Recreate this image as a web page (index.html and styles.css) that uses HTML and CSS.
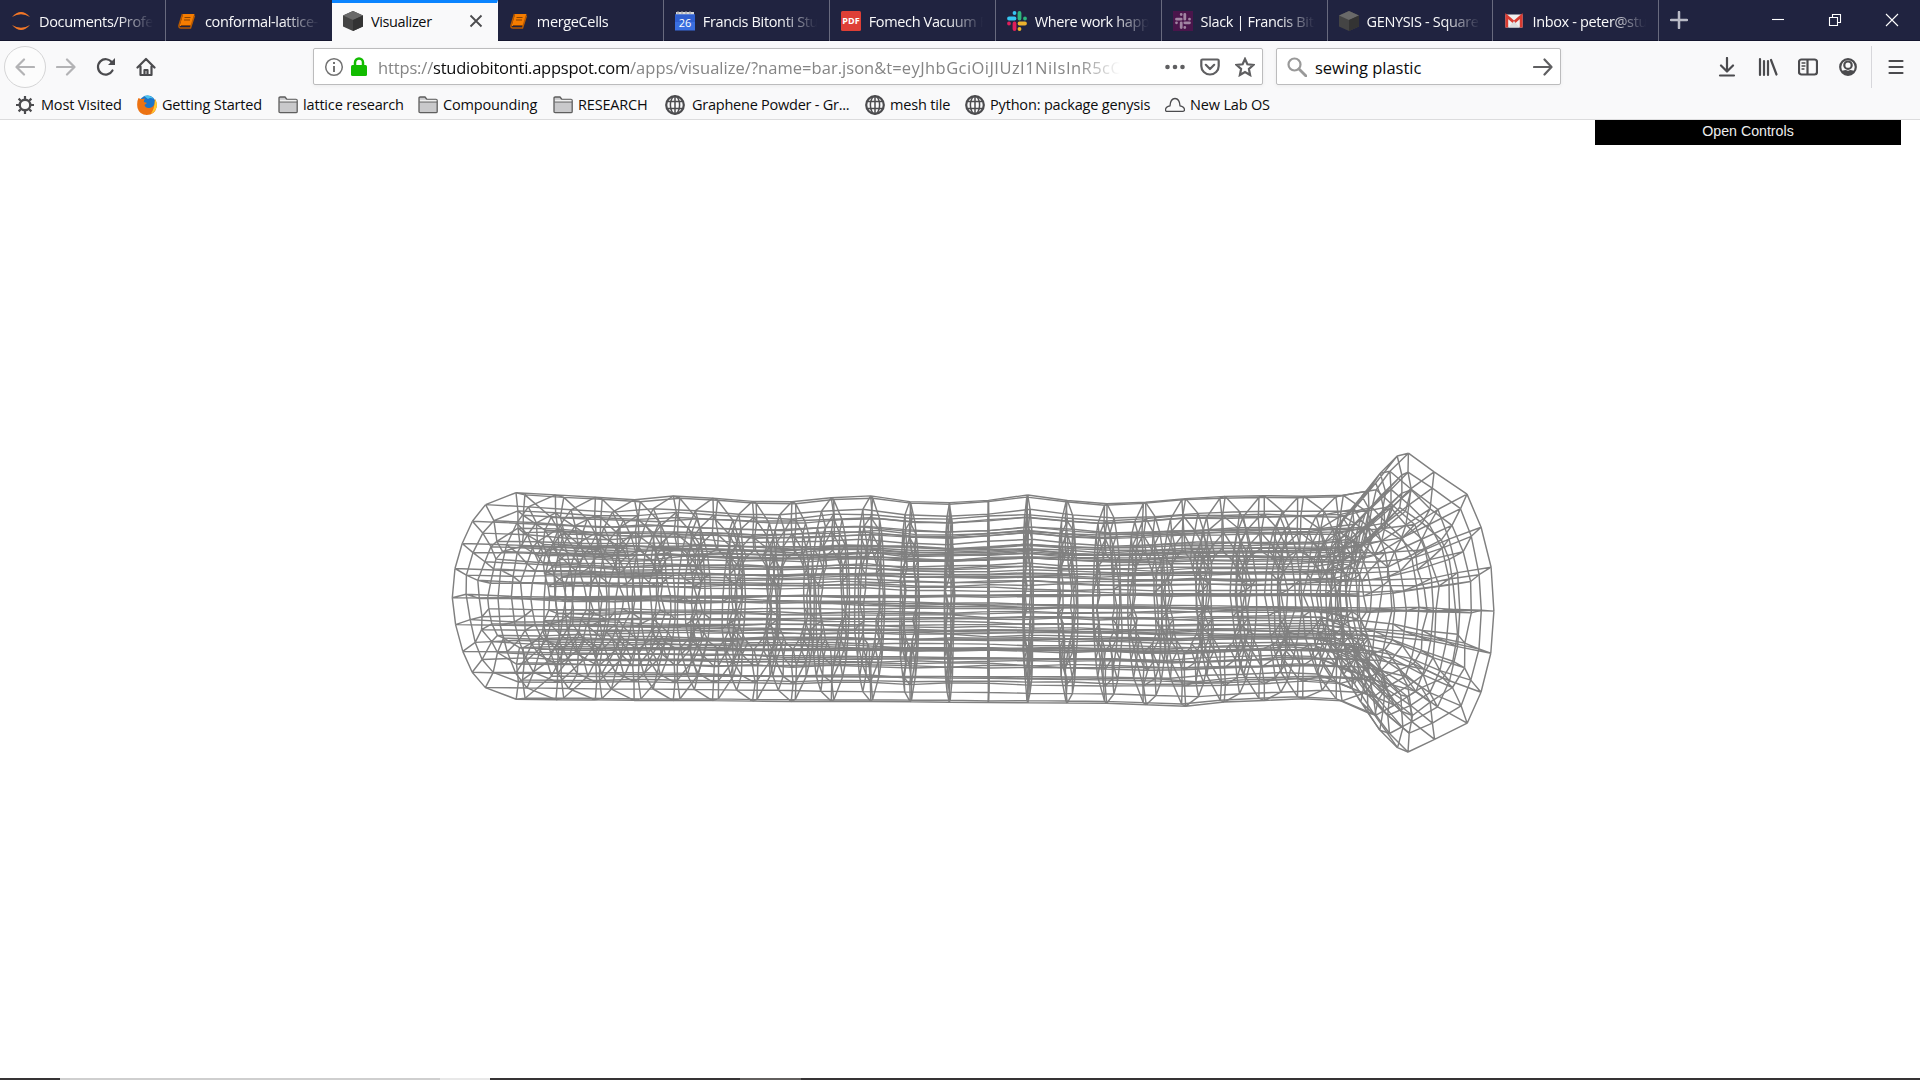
FILE: index.html
```html
<!DOCTYPE html>
<html lang="en">
<head>
<meta charset="utf-8">
<title>Visualizer</title>
<link rel="stylesheet" href="styles.css">
</head>
<body>
<svg class="defs" aria-hidden="true">
  <symbol id="book" viewBox="0 0 20 20"><path d="M6 3h11.500l-3 12H2.500z" fill="#f57c00"/><path d="M5.500 3 2 14.500q-.5 2.500 2 2.500h9.500l4-12.500" fill="none" stroke="#b85a00" stroke-width="1.500"/><path d="M7.500 6.500h6M7 9h6M4 14.500h9.500" stroke="#8a4200" stroke-width="1.200"/></symbol>
  <symbol id="cube" viewBox="0 0 20 20"><path d="M10 0l10 4.500v11L10 20 0 15.500v-11z" fill="#444"/><path d="M10 0l10 4.500L10 9 0 4.500z" fill="#696969"/><path d="M10 9l10-4.500v11L10 20z" fill="#333"/></symbol>
  <symbol id="folder" viewBox="0 0 20 20"><path d="M1 16.500V3.200Q1 2 2.200 2H7l2 2.500h9q1.200 0 1.200 1.200v10.800q0 1.200-1.200 1.200H2.200Q1 17.700 1 16.500z" fill="#c9c9cb" stroke="#5e5e5e" stroke-width="1.300"/><path d="M1.500 7h17.500" stroke="#5e5e5e"/><path d="M2 4.800h16.500v1.500H2z" fill="#efefef"/></symbol>
  <symbol id="globe" viewBox="0 0 20 20"><g fill="none" stroke="#4b4b4e" stroke-width="1.500"><circle cx="10" cy="10" r="8.800" stroke-width="2.200"/><ellipse cx="10" cy="10" rx="4.600" ry="8.800"/><path d="M10 1v18M2.500 6.500h15M2.500 13.500h15"/></g></symbol>
</svg>

<header class="tabs">
  <div class="tab"><svg class="fav" viewBox="0 0 20 20"><path d="M1 6Q10-4 19 6 10 0.500 1 6zM1 14Q10 24 19 14 10 19.500 1 14z" fill="#f37726"/></svg><span class="label">Documents/Profes</span></div>
  <div class="tab"><svg class="fav"><use href="#book"/></svg><span class="label">conformal-lattice-</span></div>
  <div class="tab active"><svg class="fav"><use href="#cube"/></svg><span class="label">Visualizer</span><svg class="x" viewBox="0 0 14 14"><path d="M1.500 1.500l11 11M12.500 1.500l-11 11"/></svg></div>
  <div class="tab"><svg class="fav"><use href="#book"/></svg><span class="label">mergeCells</span></div>
  <div class="tab"><svg class="fav" viewBox="0 0 20 20"><path d="M1 1h18v5H1z" fill="#d9d9d9"/><path d="M3 0v3M7 0v3M11 0v3M15 0v3" stroke="#999"/><path d="M0 3.500h20v16H0z" fill="#3a6fe0"/><path d="M0 3.500h20V11H0z" fill="#2f5fd0"/><text x="10" y="15.500" class="cal">26</text></svg><span class="label">Francis Bitonti Studio</span></div>
  <div class="tab"><svg class="fav" viewBox="0 0 20 20"><rect width="20" height="20" rx="1.500" fill="#de3f36"/><text x="10" y="13.300" class="pdf">PDF</text></svg><span class="label">Fomech Vacuum F</span></div>
  <div class="tab"><svg class="fav" viewBox="0 0 20 20"><g stroke-width="3.800" stroke-linecap="round"><path d="M7.500 2v0M2 7.500h5.500" stroke="#36c5f0"/><path d="M12.500 2v5.500M18 7.500v0" stroke="#2eb67d"/><path d="M12.500 12.500H18M12.500 18v0" stroke="#ecb22e"/><path d="M7.500 12.500V18M2 12.500v0" stroke="#e01e5a"/></g></svg><span class="label">Where work happen</span></div>
  <div class="tab"><svg class="fav" viewBox="0 0 20 20"><path d="M0 0h20v20H0z" fill="#4a154b"/><g stroke="#a184a2" stroke-width="2.800" stroke-linecap="round"><path d="M8.200 3.500v0M3.500 8.200h4.700M11.800 3.500v4.700M16.500 8.200v0M11.800 11.800h4.700M11.800 16.500v0M8.200 11.800v4.700M3.500 11.800v0"/></g></svg><span class="label">Slack | Francis Biton</span></div>
  <div class="tab"><svg class="fav"><use href="#cube"/></svg><span class="label">GENYSIS - Square</span></div>
  <div class="tab"><svg class="fav" viewBox="0 0 20 20"><path d="M1.500 3.500h17v13h-17z" fill="#eee"/><path d="M2.800 16.500V5l7.200 6.300L17.200 5v11.500" fill="none" stroke="#d93a30" stroke-width="2.800"/><path d="M4.500 16.500L10 10l5.500 6.500z" fill="#ddd"/></svg><span class="label">Inbox - peter@stud</span></div>
  <svg class="plus" viewBox="0 0 18 18"><path d="M9 1v16M1 9h16"/></svg>
  <div class="window-buttons">
    <svg viewBox="0 0 14 14"><path d="M1 6.500h12"/></svg>
    <svg viewBox="0 0 14 14"><path d="M1.500 4.500h8v8h-8zM4.500 4.500v-3h8v8h-3"/></svg>
    <svg viewBox="0 0 14 14"><path d="M1 1l12 12M13 1L1 13"/></svg>
  </div>
</header>

<nav class="toolbar">
  <div class="buttons">
    <span class="back"><svg class="ico pale" viewBox="0 0 20 20"><path d="M19 10H2M9 2.500L1.500 10 9 17.500"/></svg></span>
    <span class="slot"><svg class="ico pale" viewBox="0 0 20 20"><path d="M1 10h17M11 2.500L18.500 10 11 17.500"/></svg></span>
    <span class="slot"><svg class="ico" viewBox="0 0 20 20"><path d="M16.500 13.500A7.700 7.700 0 1 1 16 5.500"/><path d="M19 1v7h-7z" fill="#4b4b4e" stroke="none"/></svg></span>
    <span class="slot"><svg class="ico" viewBox="0 0 20 20"><path d="M1.500 10.500L10 2l8.500 8.500M4.500 9.500V18h11V9.500M8.500 18v-5h3v5"/></svg></span>
  </div>
  <div class="field url">
    <svg class="info" viewBox="0 0 20 20"><circle cx="10" cy="10" r="8.300"/><path d="M10 9v6M10 5v2" stroke-width="2"/></svg>
    <svg class="lock" viewBox="0 0 16 20"><path d="M4 9V5.500a4 4 0 0 1 8 0V9" fill="none" stroke="#12bc00" stroke-width="2.500"/><rect y="8" width="16" height="11" rx="1.500" fill="#12bc00"/></svg>
    <span class="address">https://<b>studiobitonti.appspot.com</b><span class="path">/apps/visualize/?name=bar.json&amp;t=<span class="token">eyJhbGciOiJIUzI1NiIsInR5cCI</span></span></span>
    <svg class="ico dots" viewBox="0 0 20 20"><circle cx="2.500" cy="10" r="2.300"/><circle cx="10" cy="10" r="2.300"/><circle cx="17.500" cy="10" r="2.300"/></svg>
    <svg class="ico" viewBox="0 0 20 20"><path d="M2.500 2.500h15q1.200 0 1.200 1.200V9a8.700 8.500 0 0 1-17.400 0V3.700q0-1.200 1.200-1.200z"/><path d="M5.800 7.800L10 12l4.200-4.200"/></svg>
    <svg class="ico star" viewBox="0 0 20 20"><path stroke-linejoin="miter" d="M10 2l2.400 5.300 5.900.7-4.400 4 1.200 6L10 15l-5.100 3 1.200-6-4.400-4 5.900-.7z"/></svg>
  </div>
  <div class="field search">
    <svg class="ico glass" viewBox="0 0 20 20"><circle cx="7.500" cy="7.500" r="6"/><path d="M12 12l7 7" stroke-width="2.800"/></svg>
    <span class="query">sewing plastic</span>
    <svg class="ico" viewBox="0 0 20 20"><path d="M1 10h17M11.500 2.500L18.500 10l-7 7.500"/></svg>
  </div>
  <div class="buttons right">
    <span class="slot"><svg class="ico" viewBox="0 0 20 20"><path d="M10 1v13M4 8.500l6 6 6-6M3 18.500h14"/></svg></span>
    <span class="slot"><svg class="ico" viewBox="0 0 20 20"><path d="M2 2v16M6 4v14M10 4v14M13 3l5.500 14.500"/></svg></span>
    <span class="slot"><svg class="ico" viewBox="0 0 20 20"><rect x="1" y="2.500" width="18" height="15" rx="2.500"/><path d="M9.500 3v14"/><path d="M4 6h3M4 9h3M4 12h2" stroke-width="1.300"/></svg></span>
    <span class="slot"><svg class="ico" viewBox="0 0 20 20"><circle cx="10" cy="10" r="7.800"/><circle cx="10" cy="8.200" r="3.700"/><path d="M3.500 14q3-1 4.500-1 2 1.500 4 0 1.500 0 4.500 1-2 4-6.500 4t-6.500-4z" fill="#4b4b4e" stroke="none"/></svg></span>
    <span class="menu"><svg class="ico" viewBox="0 0 20 20"><path d="M3.500 4h13M3.500 10h13M3.500 16h13"/></svg></span>
  </div>
</nav>

<div class="bookmarks">
  <span class="mark w1"><svg viewBox="0 0 20 20"><circle cx="9" cy="10" r="5.300" fill="none" stroke="#4b4b4e" stroke-width="2.400"/><path d="M9 1v3M9 16v3M0 10h3M15 10h3M2.600 3.600l2.200 2.200M13.200 14.200l2.200 2.200M2.600 16.400l2.200-2.200M13.200 5.800l2.200-2.200" stroke="#4b4b4e" stroke-width="2.200"/></svg>Most Visited</span>
  <span class="mark w2"><svg viewBox="0 0 20 20"><circle cx="10.500" cy="9" r="8.500" fill="#1b75c9"/><path d="M7 1q6-2 10 3-4-2-6 0z" fill="#4cc3ee"/><path d="M1.500 3Q3 4 5 4l3-.5Q6.500 5.500 7 7l3 1-2.500 2q1 3.500 5 3 3.500-.5 5-4L18 4q2.500 4 1.700 8-2 8-10 8-7 0-9.200-7Q-.5 7 1.500 3z" fill="#ec7212"/><path d="M18 4q2.500 4 1.700 8-1.500 5-6 7 4-5 4.300-15z" fill="#ffcb2e"/></svg>Getting Started</span>
  <span class="mark w3"><svg><use href="#folder"/></svg>lattice research</span>
  <span class="mark w4"><svg><use href="#folder"/></svg>Compounding</span>
  <span class="mark w5"><svg><use href="#folder"/></svg>RESEARCH</span>
  <span class="mark w6 wide"><svg><use href="#globe"/></svg>Graphene Powder - Gr...</span>
  <span class="mark w7"><svg><use href="#globe"/></svg>mesh tile</span>
  <span class="mark w8"><svg><use href="#globe"/></svg>Python: package genysis</span>
  <span class="mark w9"><svg viewBox="0 0 20 20"><path d="M2 16.300Q.5 16.300.5 14.800q0-3 4.500-4Q5.500 3.500 10 3.500t5 7.300q4.500 1 4.500 4 0 1.500-1.500 1.500z" fill="none" stroke="#4b4b4e" stroke-width="1.300"/></svg>New Lab OS</span>
</div>

<main class="stage">
  <svg class="mesh" id="mesh" viewBox="0 120 1920 958"></svg>
  <div class="controls">Open Controls</div>
</main>
<footer class="taskbar"><i class="t1"></i><i class="t2"></i><i class="t3"></i><i class="t4"></i><i class="t5"></i></footer>
<script src="mesh.js"></script>
</body>
</html>
```
FILE: styles.css
```css
* { box-sizing: border-box; }
body {
  margin: 0;
  height: 1080px;
  display: flex;
  flex-direction: column;
  overflow: hidden;
  background: #fff;
  color: #0c0c0d;
  font-family: "Open Sans", "Noto Sans", sans-serif;
  font-size: 15px;
}
svg { display: block; flex: none; }
.defs { width: 0; height: 0; position: absolute; }

.tabs { display: flex; height: 41px; flex: none; background: #202340; color: #f9f9fa; border-bottom: 1px solid #14162e; }
.tab { width: 165.95px; height: 41px; flex: none; display: flex; align-items: center; padding: 1px 12px 0 11px; border-right: 1px solid #686a7e; }
.tab:nth-child(2), .tab.active { border-right-color: transparent; }
.tab.active { background: #f9f9fa; color: #0c0c0d; border-top: 3px solid #0a84ff; padding: 0 10px 2px 11px; }
.fav { width: 20px; height: 20px; margin-right: 8px; }
.label { flex: 1; overflow: hidden; white-space: nowrap; font-size: 14.5px; letter-spacing: -0.35px; -webkit-mask-image: linear-gradient(90deg, #000 calc(100% - 36px), transparent); mask-image: linear-gradient(90deg, #000 calc(100% - 36px), transparent); }
.active .label { -webkit-mask-image: none; mask-image: none; }
.cal { font: 11px "Open Sans", sans-serif; fill: #fff; text-anchor: middle; }
.pdf { font: bold 9px "Open Sans", sans-serif; fill: #fff; text-anchor: middle; }
.x { width: 14px; height: 14px; margin-right: 4px; fill: none; stroke: #4b4b4e; stroke-width: 1.8; }
.plus { width: 18px; height: 18px; margin: 11px 0 0 11px; stroke: #b9bac6; stroke-width: 2.5; stroke-linecap: round; }
.window-buttons { margin: 13px 21px 0 auto; display: flex; gap: 43px; }
.window-buttons svg { width: 14px; height: 14px; fill: none; stroke: #fff; stroke-width: 1.1; }

.toolbar { height: 51px; flex: none; display: flex; align-items: center; background: #f9f9fa; }
.buttons { display: flex; width: 313px; padding-left: 4px; align-items: center; }
.back { width: 42px; height: 42px; border: 1px solid #d5d5d6; border-radius: 50%; background: #fcfcfc; display: grid; place-items: center; }
.slot { width: 40.2px; display: grid; place-items: center; }
.ico { width: 20px; height: 20px; fill: none; stroke: #4b4b4e; stroke-width: 2.2; stroke-linecap: round; stroke-linejoin: round; }
.pale { stroke: #b3b3b5; }
.field { height: 37px; display: flex; align-items: center; border: 1px solid #bcbcbd; border-radius: 2px; background: #fff; box-shadow: 0 1px 4px rgba(0, 0, 0, .06); font-size: 16.5px; }
.field .ico { stroke: #5f5f61; }
.url { width: 950px; margin-right: 13px; }
.info { width: 20px; height: 20px; margin-left: 10px; fill: none; stroke: #737373; stroke-width: 1.5; }
.lock { width: 16px; height: 20px; margin: 0 11px 0 7px; }
.address { width: 742px; flex: none; margin-right: 45px; padding-top: 1px; overflow: hidden; white-space: nowrap; color: #858585; letter-spacing: -0.15px; -webkit-mask-image: linear-gradient(90deg, #000 700px, transparent 742px); mask-image: linear-gradient(90deg, #000 700px, transparent 742px); }
.address b { color: #0c0c0d; font-weight: normal; letter-spacing: -0.25px; }
.path { letter-spacing: 0.04px; }
.token { letter-spacing: 0.45px; }
.url .ico { margin-right: 15px; }
.url .star { margin-right: 7px; }
.url .dots { fill: #5f5f61; stroke: none; }
.search { width: 285px; padding: 0 7px 0 10px; }
.field .glass { stroke: #999; }
.query { flex: 1; margin-left: 8px; padding-top: 1px; letter-spacing: -0.03px; }
.buttons.right { flex: 1; width: auto; padding: 0; justify-content: flex-end; }
.slot + .menu { margin-left: 3px; }
.menu { width: 49px; height: 42px; border-left: 1px solid #d7d7db; display: grid; place-items: center; }

.bookmarks { height: 28px; flex: none; display: flex; padding: 0 0 2px 16px; background: #f9f9fa; border-bottom: 1px solid #dcdcdd; }
.mark { display: flex; align-items: center; flex: none; gap: 5px; font-size: 14.5px; letter-spacing: -0.17px; white-space: nowrap; }
.mark svg { width: 20px; height: 20px; }
.mark.wide { gap: 7px; letter-spacing: -0.24px; }
.w1 { width: 121px; } .w2 { width: 141px; } .w3 { width: 140px; } .w4 { width: 135px; } .w5 { width: 112px; }
.w6 { width: 200px; } .w7 { width: 100px; } .w8 { width: 200px; }

.stage { position: relative; height: 958px; flex: none; }
.mesh { width: 1920px; height: 958px; }
.mesh path { fill: none; stroke: #808080; stroke-width: 1.45; }
.controls { position: absolute; top: 0; right: 19px; width: 306px; height: 25px; background: #000; color: #eee; font: 14.2px/23px "Liberation Sans", sans-serif; text-align: center; }
.taskbar { display: flex; height: 2px; background: #363435; }
.taskbar i { height: 2px; }
.t1 { width: 60px; } .t2 { width: 380px; background: #cfcfcf; } .t3 { width: 50px; background: #e8e8e8; } .t4 { width: 250px; } .t5 { width: 61px; background: #625f5e; }
```
FILE: mesh.js
```js
// Wireframe of a flared bar: angular spokes x radial layers x stations, in perspective.
const CX = 988.5, DEPTH = 840;
const half = [0, 14, 28, 42, 56, 86];
const angles = [];
for (const a of half) angles.push(a);
for (const a of half.slice().reverse()) angles.push(180 - a);
for (const a of half.slice(1)) angles.push(180 + a);
for (const a of half.slice(1).reverse()) angles.push(360 - a);

const crest = [103, 101, 99, 97, 101, 99, 96, 96, 100, 102, 97, 96, 99, 104, 99, 96, 98, 102, 104, 105, 105, 106];
const base = [102, 102, 102, 102, 102, 102, 102, 102, 102, 102, 102, 102, 102, 102, 102, 102, 103, 104, 100, 98, 96, 98];
const thickness = [1, .82, .65, .5];
const flare = [
  [[1372, 112], [1385, 130], [1403, 148]],
  [[1370, 93], [1387, 111], [1405, 129]],
  [[1367, 75], [1387, 93], [1406, 111]],
  [[1364, 58], [1384, 76], [1403, 94]]
];
let seed = 7;
function noise() { seed = (seed * 16807) % 2147483647; return seed / 2147483647 - .5; }

const rings = crest.length + 3;
function node(layer, k, i, drift) {
  let a = angles[k] * Math.PI / 180;
  const loose = layer ? 1 : .25;
  let x, r;
  if (i < crest.length) {
    x = CX + (i - 12) * 39;
    r = (Math.sin(a) >= 0 ? crest[i] : base[i]) * thickness[layer];
  } else {
    [x, r] = flare[layer][i - crest.length];
    const steep = Math.abs(Math.sin(a));
    if (steep > .8 && steep < .9) {
      a += Math.sign(Math.sin(a) * Math.cos(a)) * .15;
      r *= .93;
    }
  }
  const s = Math.sin(a), c = Math.cos(a);
  const z = c * (r + 3) + drift[1] * loose;
  const scale = DEPTH / (DEPTH - z);
  const axis = 597 + (x - 520) * .0062 + c * (x - 520) * .009;
  const jx = i > 0 ? noise() * (i === 12 ? 1.5 : 4) * loose : 0;
  return [CX + (x - CX + jx) * scale, axis - (s * r + (drift[0] + noise() * 2.5) * loose) * scale];
}
const grid = thickness.map((t, l) => angles.map((a, k) => {
  const drift = [noise() * 4, noise() * 8];
  return Array.from({ length: rings }, (_, i) => node(l, k, i, drift));
}));

const seg = (a, b) => `M${a[0].toFixed(1)} ${a[1].toFixed(1)}L${b[0].toFixed(1)} ${b[1].toFixed(1)}`;
const mesh = document.getElementById('mesh');
for (let l = 0; l < thickness.length; l++)
  for (let k = 0; k < angles.length; k++) {
    let d = '';
    for (let i = 0; i < rings; i++) {
      const p = grid[l][k][i];
      d += seg(p, grid[l][(k + 1) % angles.length][i]);
      if (i + 1 < rings) d += seg(p, grid[l][k][i + 1]);
      if (l + 1 < thickness.length) d += seg(p, grid[l + 1][k][i]);
    }
    const path = document.createElementNS('http://www.w3.org/2000/svg', 'path');
    path.setAttribute('d', d);
    mesh.appendChild(path);
  }
```
